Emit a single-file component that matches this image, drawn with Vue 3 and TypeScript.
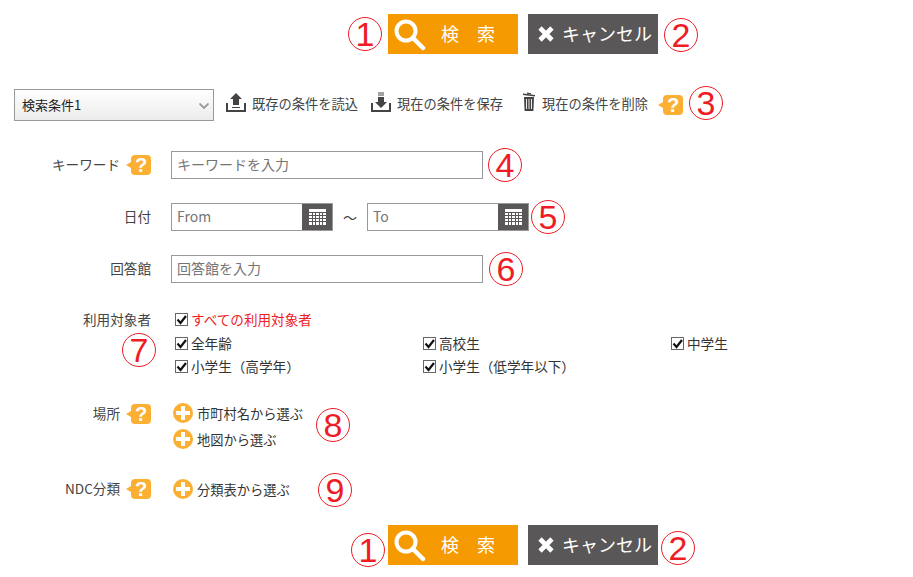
<script setup lang="ts">
interface Target { label: string; }
const targets: Target[] = [
  { label: '全年齢' },
  { label: '高校生' },
  { label: '中学生' },
  { label: '小学生（高学年）' },
  { label: '小学生（低学年以下）' },
];
const gridLines: number[] = [3, 6, 10, 13];
</script>

<template>
  <div class="page">
    <div class="actions top">
      <span class="num n1">1</span>
      <button class="btn search" type="button">
        <svg class="search-icon" viewBox="0 0 34 34" width="34" height="34"><circle cx="13" cy="14" r="9.5" fill="none" stroke="#fff" stroke-width="4"/><path d="M20 21 L30 31" stroke="#fff" stroke-width="4.5" stroke-linecap="round"/></svg>
        <span class="search-label">検索</span>
      </button>
      <button class="btn cancel" type="button">
        <svg class="x-icon" viewBox="0 0 18 18" width="18" height="18"><path d="M3 3 L15 15 M15 3 L3 15" stroke="#fff" stroke-width="4.6"/></svg>
        <span>キャンセル</span>
      </button>
      <span class="num n2">2</span>
    </div>

    <div class="toolbar">
      <div class="select-wrap">
        <select class="select"><option>検索条件1</option></select>
        <svg class="chevron" viewBox="0 0 10 6" width="10" height="6"><path d="M0.5 0.5 L5 5 L9.5 0.5" fill="none" stroke="#999" stroke-width="1.8"/></svg>
      </div>
      <a class="tool load">
        <svg viewBox="0 0 20 21" width="20" height="21"><path d="M1 11 V19 H19 V11" fill="none" stroke="#444" stroke-width="2"/><path d="M10 1 L16 7 H13 V13 H7 V7 H4 Z" fill="#444"/><rect x="6" y="15" width="8" height="1" fill="#444"/></svg>
        既存の条件を読込
      </a>
      <a class="tool save">
        <svg viewBox="0 0 20 21" width="20" height="21"><path d="M1 11 V19 H19 V11" fill="none" stroke="#444" stroke-width="2"/><path d="M7 1 H13 M7 3 H13" stroke="#444"/><path d="M7 5 H13 V10 H16 L10 16 L4 10 H7 Z" fill="#444"/></svg>
        現在の条件を保存
      </a>
      <a class="tool trash">
        <svg viewBox="0 0 14 20" width="14" height="20"><path d="M1 2.2 L13 3.8" stroke="#444" stroke-width="1.4"/><path d="M5 1.2 L9 1.8" stroke="#444" stroke-width="1.2"/><path d="M2 5 H12 L11.4 19 H2.6 Z" fill="#444"/><path d="M4.5 7 V17 M7 7 V17 M9.5 7 V17" stroke="#fff" stroke-width="0.9"/></svg>
        現在の条件を削除
      </a>
      <span class="help toolbar-help">?</span>
      <span class="num n3">3</span>
    </div>

    <div class="row keyword">
      <div class="label">キーワード<span class="help label-help">?</span></div>
      <input class="input wide" placeholder="キーワードを入力" />
      <span class="num n4">4</span>
    </div>

    <div class="row date">
      <div class="label">日付</div>
      <div class="date-box">
        <input class="date-input" placeholder="From" />
        <span class="cal">
          <svg viewBox="0 0 17 16" width="17" height="16"><rect width="17" height="16" fill="#fff"/><path v-for="x in gridLines" :key="x" :d="`M${x + 0.5} 3 V16`" stroke="#595757"/><path d="M0 3.5 H17 M0 6.5 H17 M0 9.5 H17 M0 12.5 H17" stroke="#595757"/></svg>
        </span>
      </div>
      <span class="tilde">～</span>
      <div class="date-box">
        <input class="date-input" placeholder="To" />
        <span class="cal">
          <svg viewBox="0 0 17 16" width="17" height="16"><rect width="17" height="16" fill="#fff"/><path v-for="x in gridLines" :key="x" :d="`M${x + 0.5} 3 V16`" stroke="#595757"/><path d="M0 3.5 H17 M0 6.5 H17 M0 9.5 H17 M0 12.5 H17" stroke="#595757"/></svg>
        </span>
      </div>
      <span class="num n5">5</span>
    </div>

    <div class="row answer">
      <div class="label">回答館</div>
      <input class="input wide" placeholder="回答館を入力" />
      <span class="num n6">6</span>
    </div>

    <div class="row targets">
      <div class="label target-label">利用対象者<span class="num n7">7</span></div>
      <div class="target-body">
        <label class="check all">
          <span class="box"><svg viewBox="0 0 13 13" width="13" height="13"><path d="M2.5 6.5 L5.5 10 L11 3" fill="none" stroke="#111" stroke-width="2.2"/></svg></span>
          すべての利用対象者
        </label>
        <div class="target-grid">
          <label v-for="t in targets" :key="t.label" class="check">
            <span class="box"><svg viewBox="0 0 13 13" width="13" height="13"><path d="M2.5 6.5 L5.5 10 L11 3" fill="none" stroke="#111" stroke-width="2.2"/></svg></span>
            {{ t.label }}
          </label>
        </div>
      </div>
    </div>

    <div class="row place">
      <div class="label">場所<span class="help label-help">?</span></div>
      <div class="links">
        <a class="add"><span class="plus"></span>市町村名から選ぶ</a>
        <a class="add"><span class="plus"></span>地図から選ぶ</a>
      </div>
      <span class="num n8">8</span>
    </div>

    <div class="row ndc">
      <div class="label">NDC分類<span class="help label-help">?</span></div>
      <div class="links">
        <a class="add"><span class="plus"></span>分類表から選ぶ</a>
      </div>
      <span class="num n9">9</span>
    </div>

    <div class="actions bottom">
      <span class="num n1b">1</span>
      <button class="btn search" type="button">
        <svg class="search-icon" viewBox="0 0 34 34" width="34" height="34"><circle cx="13" cy="14" r="9.5" fill="none" stroke="#fff" stroke-width="4"/><path d="M20 21 L30 31" stroke="#fff" stroke-width="4.5" stroke-linecap="round"/></svg>
        <span class="search-label">検索</span>
      </button>
      <button class="btn cancel" type="button">
        <svg class="x-icon" viewBox="0 0 18 18" width="18" height="18"><path d="M3 3 L15 15 M15 3 L3 15" stroke="#fff" stroke-width="4.6"/></svg>
        <span>キャンセル</span>
      </button>
      <span class="num n2b">2</span>
    </div>
  </div>
</template>

<style scoped>
.page {
  box-sizing: border-box;
  width: 913px;
  height: 577px;
  padding: 14px 0 0 14px;
  overflow: hidden;
  background: #fff;
  color: #333;
  font-family: "Noto Sans CJK JP", "Noto Sans", sans-serif;
  font-size: 13px;
}
.actions {
  display: flex;
  align-items: center;
  height: 40px;
  padding-left: 374px;
  position: relative;
}
.btn {
  display: flex;
  align-items: center;
  box-sizing: border-box;
  width: 130px;
  height: 40px;
  border: 0;
  padding: 0;
  color: #fff;
  font-family: inherit;
  cursor: pointer;
}
.search { background: #f59a00; padding-left: 5px; }
.search-label {
  margin-left: 14px;
  margin-bottom: 2px;
  font-size: 18px;
  letter-spacing: 18px;
}
.cancel {
  background: #595757;
  margin-left: 10px;
  padding-left: 9px;
  font-size: 18px;
}
.cancel span { margin-bottom: 3px; margin-left: -1px; }
.x-icon { margin-right: 8px; }

.num {
  position: absolute;
  box-sizing: border-box;
  width: 34px;
  height: 34px;
  border: 1px solid #ee1c25;
  border-radius: 50%;
  color: #ee1c25;
  background: #fff;
  font-family: "Liberation Sans", sans-serif;
  font-size: 34px;
  font-weight: 400;
  line-height: 32px;
  text-align: center;
}
.n1 { left: 334px; top: 3px; }
.n2 { left: 650px; top: 4px; }
.n1b { left: 337px; top: 8px; }
.n2b { left: 647px; top: 6px; }

.toolbar {
  display: flex;
  align-items: center;
  height: 32px;
  margin-top: 35px;
  position: relative;
}
.select-wrap { position: relative; width: 200px; height: 32px; }
.select {
  appearance: none;
  box-sizing: border-box;
  width: 100%;
  height: 100%;
  padding: 0 0 2px 7px;
  border: 1px solid #999;
  border-radius: 0;
  background: linear-gradient(#fff, #ececec);
  color: #222;
  font-family: inherit;
  font-size: 13px;
}
.chevron { position: absolute; right: 5px; top: 14px; }
.tool {
  display: flex;
  align-items: center;
  padding-bottom: 4px;
  color: #444;
  font-size: 13.25px;
}
.tool svg { margin-right: 6px; margin-bottom: 2px; flex: none; }
.load { margin-left: 12px; }
.save { margin-left: 13px; }
.trash { margin-left: 19px; }

.help {
  position: relative;
  display: inline-block;
  width: 20px;
  height: 20px;
  border-radius: 4px;
  background: #fbb034;
  color: #fff;
  font-family: "Liberation Sans", sans-serif;
  font-size: 20px;
  font-weight: 700;
  line-height: 20px;
  text-align: center;
}
.help::before {
  content: "";
  position: absolute;
  left: -5px;
  top: 7px;
  border-style: solid;
  border-width: 3px 5px 3px 0;
  border-color: transparent #fbb034 transparent transparent;
}
.toolbar-help { margin-left: 15px; }
.n3 { left: 675px; top: -3px; }

.row {
  display: flex;
  position: relative;
  align-items: center;
}
.label {
  box-sizing: border-box;
  width: 137px;
  flex: none;
  display: flex;
  justify-content: flex-end;
  align-items: center;
  padding-bottom: 3px;
  color: #444;
  font-size: 13.6px;
  position: relative;
}
.label-help { margin-left: 11px; margin-top: 3px; }
.keyword { margin-top: 30px; height: 28px; }
.date { margin-top: 24px; height: 28px; }
.answer { margin-top: 24px; height: 28px; }
.input {
  box-sizing: border-box;
  height: 28px;
  margin-left: 20px;
  padding: 0 5px 3px;
  border: 1px solid #999;
  border-radius: 0;
  outline: 0;
  font-family: inherit;
  font-size: 14px;
}
.input::placeholder, .date-input::placeholder { color: #757575; opacity: 1; }
.wide { width: 312px; }
.n4 { left: 474px; top: -3px; }
.n5 { left: 517px; top: -3px; }
.n6 { left: 475px; top: -3px; }

.date-box {
  box-sizing: border-box;
  display: flex;
  width: 162px;
  height: 28px;
  border: 1px solid #999;
  margin-left: 20px;
}
.date-box + .tilde + .date-box { margin-left: 0; }
.date-input {
  box-sizing: border-box;
  flex: 1;
  min-width: 0;
  border: 0;
  outline: 0;
  padding: 0 5px 2px;
  font-family: inherit;
  font-size: 14px;
}
.cal {
  flex: none;
  display: flex;
  align-items: center;
  justify-content: center;
  width: 30px;
  background: #595757;
}
.tilde {
  width: 34px;
  text-align: center;
  color: #444;
  font-size: 14px;
}

.targets { margin-top: 28px; align-items: flex-start; }
.target-label { height: 19px; }
.n7 { left: 108px; top: 22px; }
.target-body { margin-left: 24px; margin-top: -1px; }
.check {
  box-sizing: border-box;
  display: flex;
  align-items: center;
  height: 23px;
  padding-bottom: 2px;
  font-size: 13.6px;
  color: #333;
}
.all { color: #ee1c25; height: 19px; margin-bottom: 3px; }
.box {
  box-sizing: border-box;
  width: 13px;
  height: 13px;
  margin-right: 3px;
  margin-top: 2px;
  border: 1px solid #666;
  background: #fff;
  flex: none;
  display: block;
  overflow: visible;
}
.box svg { display: block; margin: -1px; }
.target-grid {
  display: grid;
  grid-template-columns: 248px 248px 120px;
}

.place { margin-top: 25px; align-items: flex-start; }
.place .label { height: 22px; }
.links {
  margin-left: 22px;
  display: flex;
  flex-direction: column;
  gap: 6px;
}
.add {
  display: flex;
  align-items: center;
  height: 20px;
  color: #333;
  font-size: 13.25px;
}
.plus {
  position: relative;
  width: 20px;
  height: 20px;
  margin-right: 4px;
  border-radius: 50%;
  background: #fbb034;
  flex: none;
}
.plus::before, .plus::after {
  content: "";
  position: absolute;
  background: #fff;
}
.plus::before { left: 3px; top: 8px; width: 14px; height: 4px; }
.plus::after { left: 8px; top: 3px; width: 4px; height: 14px; }
.n8 { left: 302px; top: 5px; }
.ndc { margin-top: 30px; height: 20px; }
.n9 { left: 304px; top: -6px; }
.bottom { margin-top: 26px; }
</style>
